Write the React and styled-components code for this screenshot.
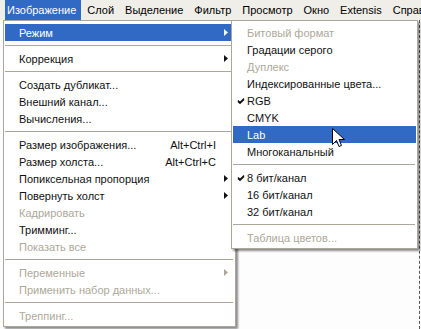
import React from "react";
import styled, { createGlobalStyle } from "styled-components";

const GlobalStyle = createGlobalStyle`
  body {
    margin: 0;
    background: #fff;
    font-family: "Liberation Sans", Arial, sans-serif;
    font-size: 11px;
  }
`;

const titles = ["Изображение", "Слой", "Выделение", "Фильтр", "Просмотр", "Окно", "Extensis", "Справка"];

const imageMenu = [
  { label: "Режим", sub: true, active: true },
  { sep: true },
  { label: "Коррекция", sub: true },
  { sep: true },
  { label: "Создать дубликат..." },
  { label: "Внешний канал..." },
  { label: "Вычисления..." },
  { sep: true },
  { label: "Размер изображения...", keys: "Alt+Ctrl+I" },
  { label: "Размер холста...", keys: "Alt+Ctrl+C" },
  { label: "Попиксельная пропорция", sub: true },
  { label: "Повернуть холст", sub: true },
  { label: "Кадрировать", off: true },
  { label: "Тримминг..." },
  { label: "Показать все", off: true },
  { sep: true },
  { label: "Переменные", sub: true, off: true },
  { label: "Применить набор данных...", off: true },
  { sep: true },
  { label: "Треппинг...", off: true },
];

const modeMenu = [
  { label: "Битовый формат", off: true },
  { label: "Градации серого" },
  { label: "Дуплекс", off: true },
  { label: "Индексированные цвета..." },
  { label: "RGB", checked: true },
  { label: "CMYK" },
  { label: "Lab", active: true },
  { label: "Многоканальный" },
  { sep: true },
  { label: "8 бит/канал", checked: true },
  { label: "16 бит/канал" },
  { label: "32 бит/канал" },
  { sep: true },
  { label: "Таблица цветов...", off: true },
];

const Check = () => (
  <svg width="8" height="8" viewBox="0 0 8 8">
    <path d="M1 3.5 L3 5.5 L7 1.5 M1 4.5 L3 6.5 L7 2.5" stroke="currentColor" strokeWidth="1.2" fill="none" />
  </svg>
);

const Arrow = () => (
  <svg width="4" height="7" viewBox="0 0 4 7">
    <path d="M0 0 L4 3.5 L0 7 Z" fill="currentColor" />
  </svg>
);

const Pointer = () => (
  <svg width="13" height="21" viewBox="0 0 13 21">
    <path
      d="M0.5 0.5 L0.5 16.5 L4.5 12.5 L7 18.5 L9.5 17.5 L7 11.5 L12.5 11.5 Z"
      fill="#fff"
      stroke="#000"
      strokeWidth="1"
      strokeLinejoin="miter"
    />
  </svg>
);

const Menu = ({ items, left, width }) => (
  <Dropdown $left={left} $width={width}>
    {items.map((item, i) =>
      item.sep ? (
        <Separator key={i} />
      ) : (
        <Item key={i} $active={item.active} $off={item.off}>
          <Mark>{item.checked && <Check />}</Mark>
          <span>{item.label}</span>
          <Keys>{item.keys}</Keys>
          <Sub>{item.sub && <Arrow />}</Sub>
        </Item>
      )
    )}
  </Dropdown>
);

export default function App() {
  return (
    <Screen>
      <GlobalStyle />
      <MenuBar>
        {titles.map((t, i) => (
          <Title key={t} $active={i === 0}>
            {t}
          </Title>
        ))}
      </MenuBar>
      <Workspace />
      <Menu items={imageMenu} left={3} width={233} />
      <Menu items={modeMenu} left={231} width={187} />
      <Cursor>
        <Pointer />
      </Cursor>
    </Screen>
  );
}

const Screen = styled.div`
  position: relative;
  width: 421px;
  height: 329px;
  overflow: hidden;
  display: flex;
  flex-direction: column;
  background: #fdfdfd;
`;

const MenuBar = styled.div`
  display: flex;
  height: 20px;
  padding-left: 5px;
  background: #efeee8;
  white-space: nowrap;
`;

const Title = styled.div`
  padding: 0 5px 0 ${(p) => (p.$active ? 2 : 6)}px;
  line-height: 20px;
  color: ${(p) => (p.$active ? "#fff" : "#000")};
  background: ${(p) => (p.$active ? "#316ac5" : "transparent")};
`;

const Workspace = styled.div`
  flex: 1;
  margin-right: 1px;
  border-right: 1px dashed #555;
`;

const Dropdown = styled.div`
  position: absolute;
  top: 20px;
  left: ${(p) => p.$left}px;
  width: ${(p) => p.$width}px;
  box-sizing: border-box;
  padding: 3px 1px 2px;
  background: #fff;
  border: 1px solid #aca899;
  box-shadow: 2px 2px 2px rgba(0, 0, 0, 0.45);
`;

const Item = styled.div`
  display: grid;
  grid-template-columns: 14px 1fr auto 16px;
  align-items: center;
  height: 17px;
  white-space: nowrap;
  color: ${(p) => (p.$active ? "#fff" : p.$off ? "#aca899" : "#111")};
  background: ${(p) => (p.$active ? "#316ac5" : "transparent")};
`;

const Mark = styled.span`
  display: flex;
  justify-content: center;
  padding-left: 1px;
`;

const Keys = styled.span`
  text-align: right;
  padding-right: 2px;
`;

const Sub = styled.span`
  display: flex;
  padding-left: 6px;
`;

const Separator = styled.div`
  height: 1px;
  margin: 4px 1px 4px 0;
  background: #aca899;
`;

const Cursor = styled.div`
  position: absolute;
  left: 332px;
  top: 128px;
  line-height: 0;
`;
